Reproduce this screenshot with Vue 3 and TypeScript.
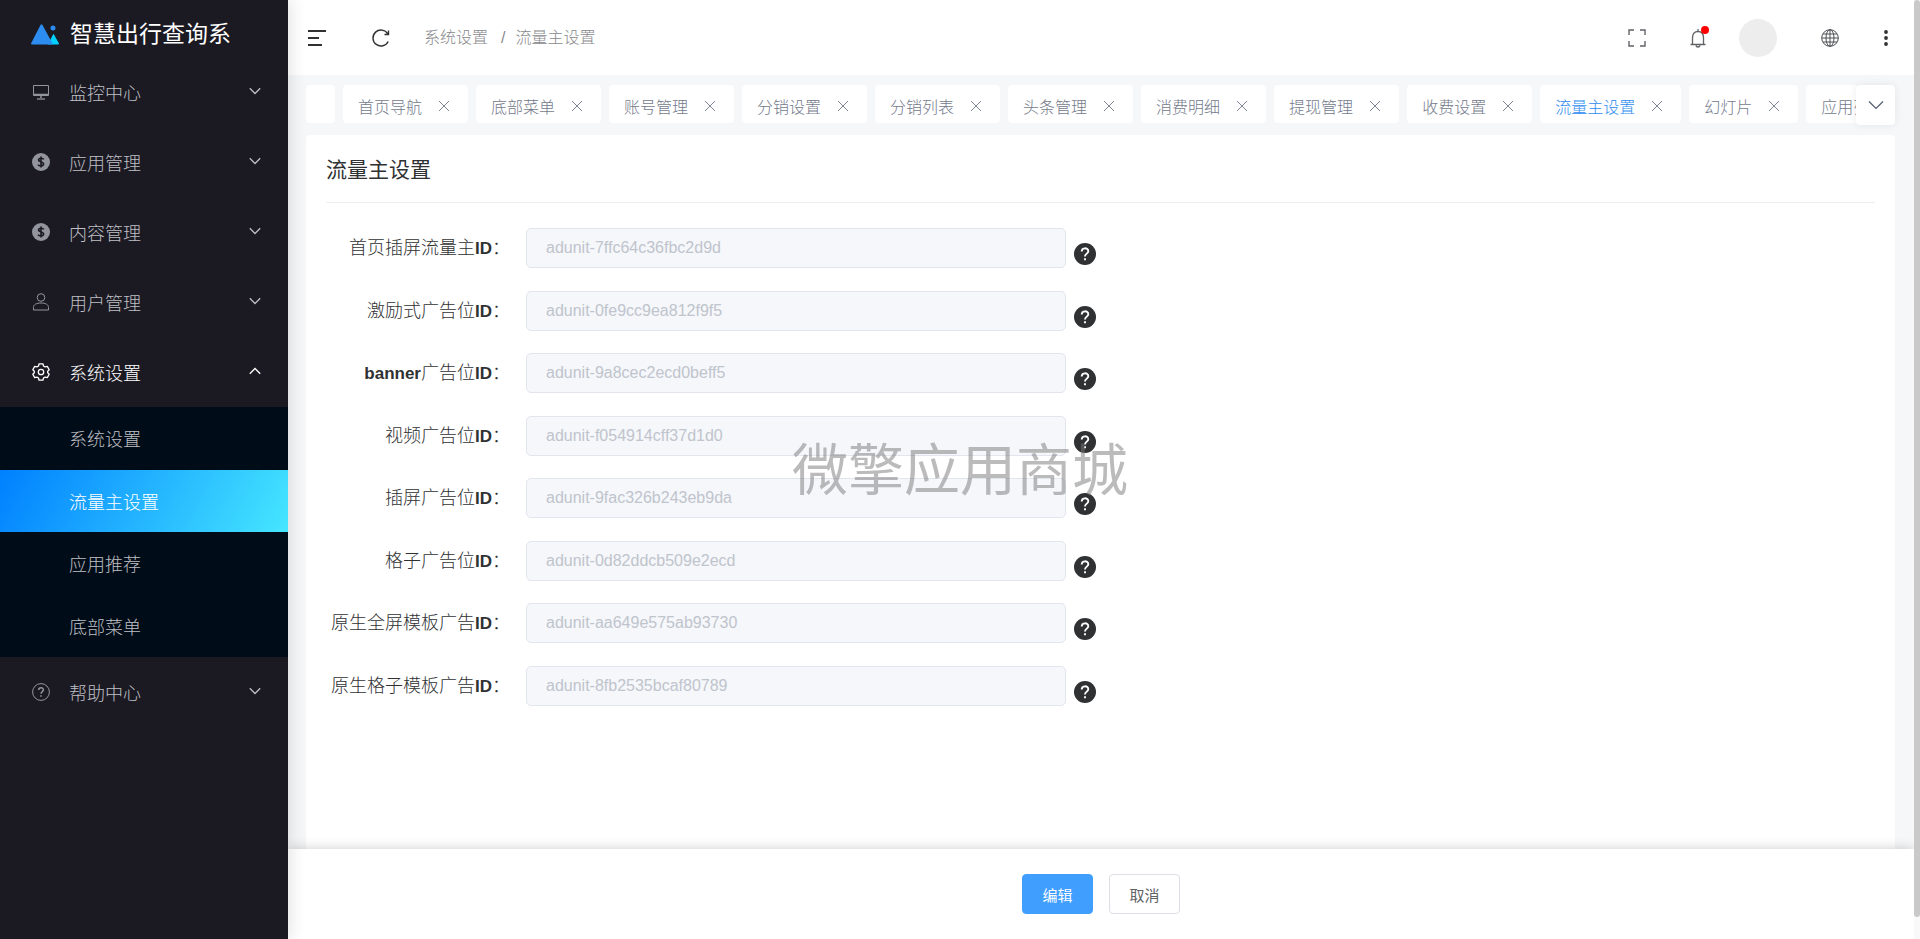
<script setup lang="ts">
import { ref } from 'vue'

interface MenuItem {
  label: string
  icon: string
  children?: string[]
}

const menu: MenuItem[] = [
  { label: '监控中心', icon: 'monitor' },
  { label: '应用管理', icon: 'coin' },
  { label: '内容管理', icon: 'coin' },
  { label: '用户管理', icon: 'user' },
  { label: '系统设置', icon: 'gear', children: ['系统设置', '流量主设置', '应用推荐', '底部菜单'] },
  { label: '帮助中心', icon: 'help' }
]

const current = ref('流量主设置')

const tabs: string[] = [
  '首页导航', '底部菜单', '账号管理', '分销设置', '分销列表', '头条管理',
  '消费明细', '提现管理', '收费设置', '流量主设置', '幻灯片', '应用列表'
]

interface Field {
  latin?: string
  label: string
  value: string
}

const fields = ref<Field[]>([
  { label: '首页插屏流量主', value: 'adunit-7ffc64c36fbc2d9d' },
  { label: '激励式广告位', value: 'adunit-0fe9cc9ea812f9f5' },
  { latin: 'banner', label: '广告位', value: 'adunit-9a8cec2ecd0beff5' },
  { label: '视频广告位', value: 'adunit-f054914cff37d1d0' },
  { label: '插屏广告位', value: 'adunit-9fac326b243eb9da' },
  { label: '格子广告位', value: 'adunit-0d82ddcb509e2ecd' },
  { label: '原生全屏模板广告', value: 'adunit-aa649e575ab93730' },
  { label: '原生格子模板广告', value: 'adunit-8fb2535bcaf80789' }
])
</script>

<template>
  <div class="layout">
    <aside class="sidebar">
      <div class="brand">
        <svg class="brand-logo" viewBox="0 0 28 22" aria-hidden="true">
          <path d="M17 21.500 22 11.500Q22.500 10.500 23 11.500L28 20.500Q28 21.500 27 21.500Z" fill="#00d0ff" />
          <path d="M0 20.500 9.500 2Q10.500.5 11.500 2L21.500 20.500Q22 21.500 21 21.500H1Q0 21.500 0 20.500Z" fill="#2d8cf0" />
          <circle cx="22" cy="5" r="2.500" fill="#2d8cf0" />
        </svg>
        <span>智慧出行查询系</span>
      </div>
      <nav>
        <template v-for="item in menu" :key="item.label">
          <button type="button" class="menu-item" :class="{ open: item.children }">
            <svg class="menu-icon" viewBox="0 0 18 18" aria-hidden="true">
              <g v-if="item.icon === 'monitor'" fill="none" stroke="currentColor">
                <path d="M1.500 2.500h15v10h-15z" />
                <path d="M1.500 11.500h15M9 13v2" stroke-width="1.500" />
                <path d="M5 16h8" stroke-width="1.300" />
              </g>
              <g v-else-if="item.icon === 'coin'">
                <circle cx="9" cy="9" r="9" fill="currentColor" />
                <path d="M11.800 6.300C11 5 7 4.500 6.500 6.700 6.300 9.200 11.800 8.300 11.600 11.200 11.300 13.500 7 13.300 6.100 11.600M9 3.400v11.200" fill="none" stroke="#1b1a23" stroke-width="1.600" />
              </g>
              <g v-else-if="item.icon === 'user'" fill="none" stroke="currentColor">
                <circle cx="9" cy="4.500" r="3.800" />
                <path d="M1.500 17v-2.500c0-3 3-4.500 7.500-4.500s7.500 1.500 7.500 4.500V17z" />
              </g>
              <g v-else-if="item.icon === 'gear'" fill="none" stroke="currentColor" stroke-width="1.300">
                <path d="M7 .8h4l.5 2.200 1.600.9 2.200-.5 1.900 3.300-1.500 1.500v1.600l1.500 1.500-1.900 3.300-2.200-.5-1.600.9-.5 2.200H7l-.5-2.200-1.600-.9-2.200.5-1.900-3.300 1.500-1.500V8.200L.8 6.700l1.900-3.300 2.200.5L6.500 3z" stroke-linejoin="round" />
                <circle cx="9" cy="9" r="2.700" />
              </g>
              <g v-else fill="none" stroke="currentColor">
                <circle cx="9" cy="9" r="8.400" />
                <path d="M6.700 7c0-3 4.700-3 4.700-.2C11.400 8.500 9 8.700 9 10.800M9 12.200v1.500" stroke-width="1.500" />
              </g>
            </svg>
            <span class="menu-label">{{ item.label }}</span>
            <svg class="menu-arrow" viewBox="0 0 12 8" aria-hidden="true">
              <path :d="item.children ? 'M.8 6.800 6 1.500l5.200 5.300' : 'M.8 1.200 6 6.500l5.200-5.300'" fill="none" stroke="currentColor" stroke-width="1.300" />
            </svg>
          </button>
          <div v-if="item.children" class="submenu">
            <a
              v-for="child in item.children"
              :key="child"
              href="#"
              :class="{ active: child === current }"
              @click.prevent="current = child"
            >{{ child }}</a>
          </div>
        </template>
      </nav>
    </aside>

    <div class="main">
      <header class="topbar">
        <button type="button" class="icon-btn" aria-label="折叠菜单">
          <svg width="20" height="18" viewBox="0 0 20 18"><path d="M1 2h18M1 9h11M1 16h14" stroke="#303133" stroke-width="2" fill="none" /></svg>
        </button>
        <button type="button" class="icon-btn refresh" aria-label="刷新">
          <svg width="18" height="20" viewBox="0 0 18 20"><path d="M16.200 13.500A8 8 0 1 1 15.800 5.800M16.500 2.500v4h-4" stroke="#303133" stroke-width="1.400" fill="none" /></svg>
        </button>
        <nav class="crumbs" aria-label="面包屑">
          <a href="#">系统设置</a><span>/</span><a href="#">流量主设置</a>
        </nav>
        <div class="tools">
          <button type="button" class="icon-btn" aria-label="全屏">
            <svg width="18" height="18" viewBox="0 0 18 18"><path d="M1 6V1h5M12 1h5v5M17 12v5h-5M6 17H1v-5" stroke="#606266" stroke-width="1.400" fill="none" /></svg>
          </button>
          <button type="button" class="icon-btn bell" aria-label="消息">
            <svg width="16" height="20" viewBox="0 0 16 20"><path d="M.5 16.500h15M2.500 16V10c0-4 2-6.500 5.500-6.500s5.500 2.500 5.500 6.500v6M8 1v2.500M6 17.500c.5 2 3.500 2 4 0" stroke="#606266" stroke-width="1.300" fill="none" /></svg>
            <i class="dot"></i>
          </button>
          <button type="button" class="avatar" aria-label="用户"></button>
          <button type="button" class="icon-btn globe" aria-label="语言">
            <svg width="18" height="18" viewBox="0 0 18 18"><g stroke="#4d4f53" fill="none"><circle cx="9" cy="9" r="8.300" /><ellipse cx="9" cy="9" rx="4" ry="8.300" /><path d="M9 .7v16.600M.7 9h16.600M2 5h14M2 13h14" /></g></svg>
          </button>
          <button type="button" class="icon-btn more" aria-label="更多">
            <svg width="4" height="18" viewBox="0 0 4 18"><g fill="#303133"><circle cx="2" cy="3" r="1.900" /><circle cx="2" cy="9" r="1.900" /><circle cx="2" cy="15" r="1.900" /></g></svg>
          </button>
        </div>
      </header>

      <div class="content">
        <div class="tabbar">
          <div class="tabs">
            <div class="tab stub"></div>
            <div v-for="tab in tabs" :key="tab" class="tab" :class="{ active: tab === current }">
              <a href="#">{{ tab }}</a>
              <button type="button" class="close" :aria-label="'关闭' + tab">
                <svg width="12" height="12" viewBox="0 0 12 12"><path d="M1 1l10 10M11 1 1 11" stroke="#808695" fill="none" /></svg>
              </button>
            </div>
          </div>
          <button type="button" class="tab-more" aria-label="更多标签">
            <svg width="16" height="10" viewBox="0 0 16 10"><path d="M1 1.500l7 7 7-7" stroke="#515a6e" stroke-width="1.200" fill="none" /></svg>
          </button>
        </div>

        <section class="card">
          <h1>流量主设置</h1>
          <form class="form" @submit.prevent>
            <div v-for="(field, i) in fields" :key="field.label" class="row">
              <label :for="'field-' + i"><b v-if="field.latin">{{ field.latin }}</b>{{ field.label }}<b>ID</b>：</label>
              <input :id="'field-' + i" v-model="field.value" type="text" disabled />
              <svg class="hint" viewBox="0 0 22 22" role="img" aria-label="说明">
                <circle cx="11" cy="11" r="11" fill="#303133" />
                <path d="M7.700 8.600c0-4.400 6.600-4.200 6.600-.4C14.300 10.600 11 10.700 11 13.500M11 15.300v2" fill="none" stroke="#fff" stroke-width="1.900" />
              </svg>
            </div>
          </form>
        </section>
      </div>

      <footer class="actions">
        <button type="button" class="btn primary">编辑</button>
        <button type="button" class="btn">取消</button>
      </footer>
    </div>

    <div class="scrollbar"><div class="thumb"></div></div>
    <div class="watermark">微擎应用商城</div>
  </div>
</template>

<style>
body {
  margin: 0;
}
</style>

<style scoped>
.layout {
  display: flex;
  min-height: 100vh;
  font-family: "Liberation Sans", "Noto Sans CJK SC", sans-serif;
  font-weight: 300;
  font-size: 16px;
  color: #303133;
  background: #f5f7f9;
}

.layout * {
  box-sizing: border-box;
}

button {
  padding: 0;
  border: 0;
  background: none;
  font: inherit;
  color: inherit;
  cursor: pointer;
}

a {
  color: inherit;
  text-decoration: none;
}

svg {
  display: block;
}

.sidebar {
  z-index: 2;
  flex: 0 0 288px;
  background: #1b1a23;
  box-shadow: 2px 0 16px rgba(0, 0, 0, 0.12);
  color: #bfbfc3;
}

.brand {
  display: flex;
  align-items: center;
  gap: 11px;
  height: 57px;
  padding: 11px 0 0 31px;
  font-size: 23px;
  font-weight: 400;
  line-height: 32px;
  color: #fff;
}

.brand-logo {
  width: 28px;
  height: 22px;
}

.menu-item {
  display: flex;
  align-items: center;
  width: 100%;
  height: 70px;
  padding: 0 27px 0 32px;
  font-size: 18px;
  text-align: left;
}

.menu-item.open {
  color: #fff;
}

.menu-icon {
  width: 18px;
  height: 18px;
  margin-right: 19px;
  color: #93959d;
}

.menu-item.open .menu-icon {
  color: #fff;
}

.menu-label {
  flex: 1;
}

.menu-arrow {
  width: 12px;
  height: 8px;
  margin-bottom: 3px;
}

.submenu {
  display: grid;
  grid-template-rows: repeat(4, 1fr);
  height: 250px;
  background: #000c17;
}

.submenu a {
  display: flex;
  align-items: center;
  padding-left: 69px;
  font-size: 18px;
}

.submenu a.active {
  color: #fff;
  background: linear-gradient(118deg, #0080ff, #46e6ff);
}

.main {
  display: flex;
  flex: 1;
  flex-direction: column;
  min-width: 0;
}

.topbar {
  display: flex;
  align-items: center;
  height: 75px;
  padding: 0 26px 0 19px;
  background: #fff;
}

.refresh {
  margin-left: 45px;
}

.crumbs {
  display: flex;
  margin-left: 34px;
  line-height: 24px;
  color: #88898c;
}

.crumbs span {
  margin: 0 10px 0 13px;
}

.tools {
  display: flex;
  align-items: center;
  margin-left: auto;
}

.bell {
  position: relative;
  margin-left: 44px;
}

.dot {
  position: absolute;
  top: -2px;
  right: -3px;
  width: 8px;
  height: 8px;
  border-radius: 50%;
  background: #f00;
}

.avatar {
  width: 38px;
  height: 38px;
  margin-left: 33px;
  border-radius: 50%;
  background: #ededed;
}

.globe {
  margin-left: 44px;
}

.more {
  margin-left: 45px;
}

.content {
  display: flex;
  flex: 1;
  flex-direction: column;
  padding: 10px 19px 0 18px;
}

.tabbar {
  display: flex;
  align-items: flex-start;
  height: 50px;
}

.tabs {
  display: flex;
  flex: 1;
  gap: 8px;
  min-width: 0;
  overflow: hidden;
}

.tab {
  display: flex;
  flex: none;
  align-items: center;
  gap: 16px;
  height: 38px;
  padding: 4px 18px 0 15px;
  border-radius: 4px;
  background: #fff;
  color: #747a8b;
}

.tab.stub {
  width: 29px;
  padding: 0;
}

.tab.active {
  color: #2d8cf0;
}

.tab-more {
  display: flex;
  align-items: center;
  justify-content: center;
  width: 39px;
  height: 40px;
  border-radius: 4px;
  background: #fff;
  box-shadow: 0 0 8px rgba(0, 0, 0, 0.08);
}

.card {
  flex: 1;
  padding: 0 20px;
  border-radius: 4px 4px 0 0;
  background: #fff;
}

h1 {
  margin: 0 0 25px;
  padding-top: 2px;
  border-bottom: 1px solid #ebedf0;
  font-size: 21px;
  font-weight: 400;
  line-height: 65px;
}

.form {
  display: grid;
  grid-template-rows: repeat(8, 1fr);
  min-height: 500px;
}

.row {
  display: flex;
  align-items: flex-start;
}

label {
  flex: 0 0 200px;
  padding-right: 16px;
  font-size: 18px;
  line-height: 40px;
  text-align: right;
  white-space: nowrap;
}

label b {
  font-size: 17px;
  font-weight: 700;
}

input {
  width: 540px;
  height: 40px;
  padding: 0 19px;
  border: 1px solid #e2e5ee;
  border-radius: 5px;
  background: #f5f7fb;
  font: inherit;
  color: #c0c4cc;
}

.hint {
  width: 22px;
  height: 22px;
  margin: 15px 0 0 8px;
}

.actions {
  z-index: 1;
  display: flex;
  justify-content: center;
  gap: 16px;
  padding: 25px 0;
  background: #fff;
  box-shadow: 0 0 12px rgba(0, 0, 0, 0.2);
}

.btn {
  width: 71px;
  height: 40px;
  border: 1px solid #dcdfe6;
  border-radius: 4px;
  font-size: 15px;
  font-weight: 400;
  color: #606266;
}

.btn.primary {
  border-color: #409eff;
  background: #409eff;
  color: #fff;
}

.scrollbar {
  z-index: 2;
  flex: 0 0 6px;
  padding-bottom: 22px;
  display: flex;
  background: #f9f9f9;
}

.thumb {
  flex: 1;
  border-radius: 3px;
  background: #c9c9c9;
}

.watermark {
  position: fixed;
  inset: 0;
  z-index: 3;
  display: flex;
  align-items: center;
  justify-content: center;
  padding-bottom: 8px;
  font-size: 56px;
  font-weight: 400;
  color: rgba(120, 120, 120, 0.5);
  pointer-events: none;
}
</style>
